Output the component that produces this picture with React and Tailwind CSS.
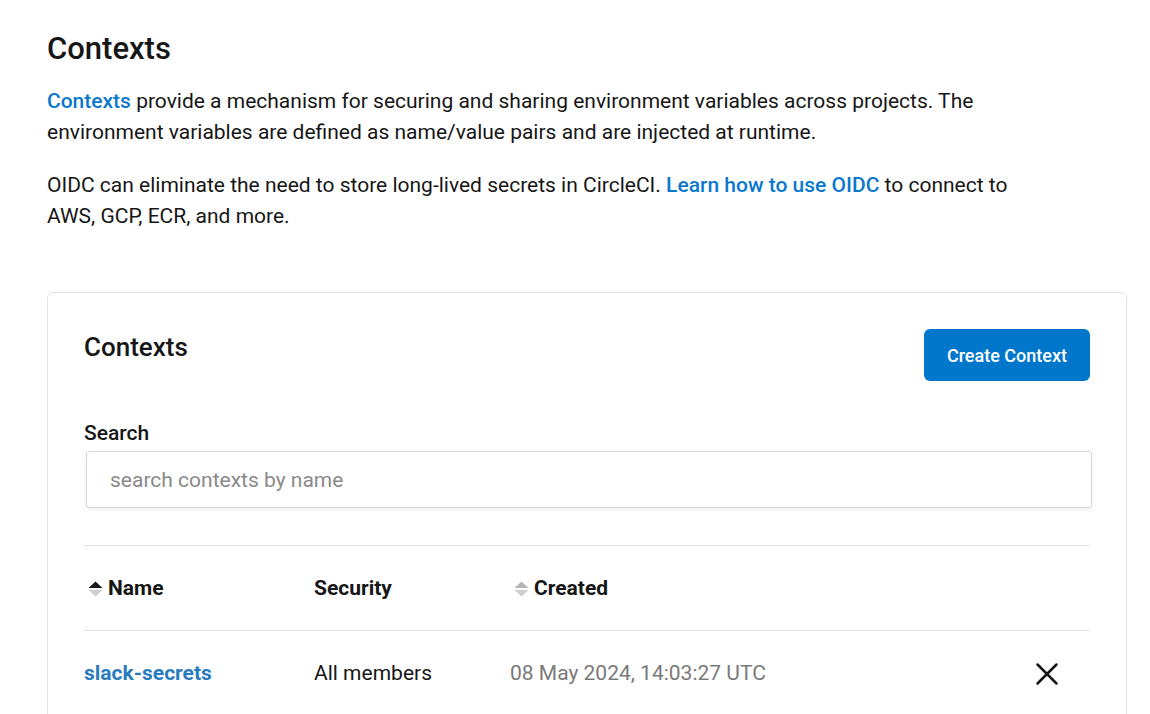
import { X } from 'lucide-react'

const SortIcon = ({ active }) => (
  <svg width="15" height="22" viewBox="0 0 15 22" className="shrink-0">
    <path d="M0.5 10 L7.5 3.5 L14.5 10 Z" fill={active ? '#161616' : '#b5b5b5'} />
    <path d="M0.5 12 L7.5 18.5 L14.5 12 Z" fill="#cfcfcf" />
  </svg>
)

const App = () => {
  return (
    <div className="min-h-screen bg-white text-[#161616]" style={{ fontFamily: 'Roboto, "Open Sans", sans-serif' }}>
      <div className="pl-[47px] pr-[23px] pt-[28px]">
        <h1 className="text-[31px] font-medium leading-[42px]">Contexts</h1>

        {/* Intro */}
        <p className="mt-[16px] text-[21px] leading-[31px] max-w-[960px]">
          <a href="#" className="text-[#0a78cc] font-medium">Contexts</a> provide a mechanism for securing and sharing environment variables across projects. The environment variables are defined as name/value pairs and are injected at runtime.
        </p>
        <p className="mt-[22px] text-[21px] leading-[31px] max-w-[970px]">
          OIDC can eliminate the need to store long-lived secrets in CircleCI. <a href="#" className="text-[#0a78cc] font-medium">Learn how to use OIDC</a> to connect to AWS, GCP, ECR, and more.
        </p>

        {/* Card */}
        <div className="mt-[60px] border border-[#e3e3e3] rounded-[6px] px-[36px] pt-[36px] pb-[20px]">
          <div className="flex items-start justify-between">
            <h2 className="text-[26px] font-medium leading-[36px]">Contexts</h2>
            <button className="h-[52px] px-[23px] rounded-[6px] bg-[#0177cc] text-white text-[18px] font-medium">
              Create Context
            </button>
          </div>

          <label className="block mt-[39px] text-[21px] font-medium leading-[26px]">Search</label>
          <input
            type="text"
            placeholder="search contexts by name"
            className="mt-[5px] ml-[2px] w-[1006px] h-[57px] border border-[#d7d7d7] rounded-[3px] px-[23px] text-[21px] placeholder:text-[#8a8a8a] shadow-[0_2px_4px_rgba(0,0,0,0.06)] outline-none"
          />

          {/* Table */}
          <div className="mt-[37px] border-t border-[#e3e3e3]">
            <div className="flex items-center h-[85px] pt-[1px] border-b border-[#e3e3e3] text-[21px] font-bold">
              <div className="w-[230px] flex items-center gap-[5px] pl-[4px]">
                <SortIcon active />
                <span>Name</span>
              </div>
              <div className="w-[196px]">Security</div>
              <div className="flex items-center gap-[5px] pl-[4px]">
                <SortIcon />
                <span>Created</span>
              </div>
            </div>
            <div className="flex items-center h-[84px] pt-[2px] text-[21px]">
              <a href="#" className="w-[230px] text-[#2a7bbd] font-bold">slack-secrets</a>
              <div className="w-[196px]">All members</div>
              <div className="flex-1 text-[#7a7a7a]">08 May 2024, 14:03:27 UTC</div>
              <X size={38} strokeWidth={1.6} className="mr-[24px] text-[#161616]" />
            </div>
          </div>
        </div>
      </div>
    </div>
  )
}

export default App
